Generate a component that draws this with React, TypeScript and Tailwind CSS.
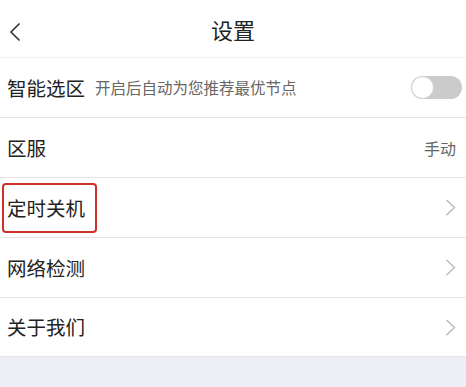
import { useState } from "react";

const font = { fontFamily: '"Noto Sans CJK SC", "Noto Sans", sans-serif' };

function Chevron() {
    return (
        <svg width="11" height="17" viewBox="0 0 11 17" fill="none">
            <path d="M1.5 1l8 7.5-8 7.5" stroke="#b8b8b8" strokeWidth="1.4" />
        </svg>
    );
}

interface RowProps {
    label: string;
    highlight?: boolean;
    right?: React.ReactNode;
    sub?: string;
    last?: boolean;
}

function Row({ label, highlight, right, sub, last }: RowProps) {
    return (
        <div
            className={`flex items-center border-b border-[#e4e4e4] bg-white pl-[7px] pr-[10px] ${last ? "h-[59px]" : "h-[60px]"}`}
        >
            <div className="flex flex-1 items-center">
                {highlight ? (
                    <span className="-ml-[5px] flex h-[50px] items-center rounded-[4px] border-2 border-[#d0302c] pl-[3px] pr-[10px] text-[19.5px] text-[#222]">
                        {label}
                    </span>
                ) : (
                    <span className="text-[19.5px] text-[#222]">{label}</span>
                )}
                {sub && (
                    <span className="ml-[10px] text-[15.5px] text-[#666]">{sub}</span>
                )}
            </div>
            {right}
        </div>
    );
}

export default function App() {
    const [auto, setAuto] = useState(false);

    return (
        <div className="flex h-[387px] w-[466px] flex-col bg-[#eeeef5]" style={font}>
            {/* header */}
            <div className="relative flex h-[58px] items-center justify-center border-b border-[#f0f0f0] bg-white">
                <svg className="absolute left-[9px] top-[22px]" width="12" height="20" viewBox="0 0 12 20" fill="none">
                    <path d="M10.5 1.5L2 10l8.5 8.5" stroke="#333" strokeWidth="1.6" />
                </svg>
                <span className="mt-[2px] text-[22px] text-[#222]">设置</span>
            </div>

            <Row
                label="智能选区"
                sub="开启后自动为您推荐最优节点"
                right={
                    <button
                        onClick={() => setAuto(!auto)}
                        className={`-mr-[6px] flex h-[23px] w-[51px] items-center rounded-full ${auto ? "bg-[#4cd964]" : "bg-[#cbcbcb]"}`}
                    >
                        <span
                            className={`h-[23px] w-[23px] rounded-full border border-[#d0d0d0] bg-white ${auto ? "ml-[28px]" : ""}`}
                        />
                    </button>
                }
            />
            <Row
                label="区服"
                right={<span className="text-[16px] text-[#666]">手动</span>}
            />
            <Row label="定时关机" highlight right={<Chevron />} />
            <Row label="网络检测" right={<Chevron />} />
            <Row label="关于我们" right={<Chevron />} last />
        </div>
    );
}
